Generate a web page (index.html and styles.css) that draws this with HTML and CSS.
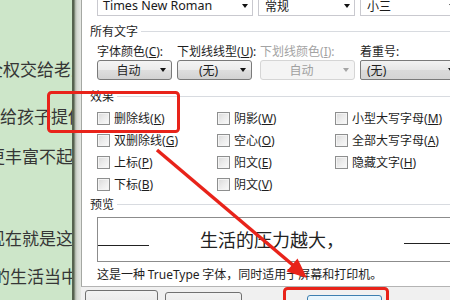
FILE: index.html
```html
<!DOCTYPE html>
<html>
<head>
<meta charset="utf-8">
<link rel="stylesheet" href="styles.css">
</head>
<body>
<div class="screen">
  <div class="doc">
    <p class="ln l0">的给孩子的的给孩子</p>
    <p class="ln l1">全权交给老人</p>
    <p class="ln l2">给孩子提供</p>
    <p class="ln l3">更丰富不起</p>
    <p class="ln l4">现在就是这</p>
    <p class="ln l5">的生活当中</p>
  </div>
  <div class="frame"></div>
  <div class="dialog">
    <div class="panel">
      <div class="row-top">
        <div class="combo c-name">Times New Roman<i class="arr"></i></div>
        <div class="combo c-style">常规<i class="arr"></i></div>
        <div class="combo c-size">小三<i class="arr"></i></div>
      </div>
      <div class="section-title">所有文字</div>
      <div class="fields">
        <div class="field f1"><div class="flabel">字体颜色<span class="k">(<u>C</u>):</span></div><div class="btn-drop">自动<i class="arr"></i></div></div>
        <div class="field f2"><div class="flabel">下划线线型<span class="k">(<u>U</u>):</span></div><div class="btn-drop"><span class="k">(</span>无<span class="k">)</span><i class="arr"></i></div></div>
        <div class="field f3"><div class="flabel disabled">下划线颜色<span class="k">(<u>I</u>):</span></div><div class="btn-drop off">自动<i class="arr"></i></div></div>
        <div class="field f4"><div class="flabel">着重号<span class="k">:</span></div><div class="btn-drop left"><span class="k">(</span>无<span class="k">)</span><i class="arr"></i></div></div>
      </div>
      <div class="section-title t-effect">效果</div>
      <div class="checks">
        <div class="chk"><span class="box"></span><span class="lbl">删除线<span class="k">(<u>K</u>)</span></span></div>
        <div class="chk"><span class="box"></span><span class="lbl">阴影<span class="k">(<u>W</u>)</span></span></div>
        <div class="chk"><span class="box"></span><span class="lbl">小型大写字母<span class="k">(<u>M</u>)</span></span></div>
        <div class="chk"><span class="box"></span><span class="lbl">双删除线<span class="k">(<u>G</u>)</span></span></div>
        <div class="chk"><span class="box"></span><span class="lbl">空心<span class="k">(<u>O</u>)</span></span></div>
        <div class="chk"><span class="box"></span><span class="lbl">全部大写字母<span class="k">(<u>A</u>)</span></span></div>
        <div class="chk"><span class="box"></span><span class="lbl">上标<span class="k">(<u>P</u>)</span></span></div>
        <div class="chk"><span class="box"></span><span class="lbl">阳文<span class="k">(<u>E</u>)</span></span></div>
        <div class="chk"><span class="box"></span><span class="lbl">隐藏文字<span class="k">(<u>H</u>)</span></span></div>
        <div class="chk"><span class="box"></span><span class="lbl">下标<span class="k">(<u>B</u>)</span></span></div>
        <div class="chk"><span class="box"></span><span class="lbl">阴文<span class="k">(<u>V</u>)</span></span></div>
      </div>
      <div class="section-title t-preview">预览</div>
      <div class="preview">
        <span class="pline pl-left"></span>
        <span class="ptext">生活的压力越大，</span>
        <span class="pline pl-right"></span>
      </div>
      <div class="note">这是一种 <span class="k">TrueType</span> 字体，同时适用于屏幕和打印机。</div>
    </div>
    <div class="footer">
      <div class="btn b1"></div>
      <div class="btn b2"></div>
      <div class="btn b3 hot"></div>
    </div>
  </div>
  <svg class="overlay" width="450" height="300" viewBox="0 0 450 300">
    <rect x="48.5" y="92.5" width="130" height="39" rx="3" fill="none" stroke="#e8231a" stroke-width="3"/>
    <rect x="284.5" y="288.5" width="103" height="22" rx="3" fill="none" stroke="#e8231a" stroke-width="3"/>
    <line x1="157" y1="150" x2="294" y2="266" stroke="#e8231a" stroke-width="3.5"/>
    <polygon points="307,278 286.5,271.5 297.5,258.5" fill="#e8231a"/>
  </svg>
</div>
</body>
</html>
```

FILE: styles.css
```css
* { box-sizing: border-box; }
html, body { margin: 0; padding: 0; }
body { width: 450px; height: 300px; overflow: hidden; background: #fff; }
.screen {
  position: relative;
  display: flex;
  width: 450px;
  height: 300px;
  overflow: hidden;
  font-family: "Noto Sans CJK SC", "Noto Sans", sans-serif;
  font-size: 12px;
  color: #1e1e1e;
  text-autospace: no-autospace;
}
.k { font-family: "Noto Sans", "DejaVu Sans", sans-serif; }

/* document behind dialog */
.doc {
  width: 72px;
  flex-shrink: 0;
  background: #cde6c9;
  overflow: hidden;
  color: #363636;
  font-size: 17px;
  line-height: 20px;
}
.ln { margin: 0; white-space: nowrap; }
.l0 { margin-top: -19px; text-indent: -6px; }
.l1 { margin-top: 58px; text-indent: -14px; }
.l2 { margin-top: 27px; text-indent: 0; }
.l3 { margin-top: 20px; text-indent: -12px; }
.l4 { margin-top: 62px; text-indent: -12px; }
.l5 { margin-top: 18px; text-indent: -7px; }

/* window frame strip */
.frame {
  width: 9px;
  flex-shrink: 0;
  background: linear-gradient(90deg, #56624f 0, #56624f 2px, #a9b0a4 3px, #d5d9d2 5px, #e6e8e4 9px);
}

.dialog {
  flex: 1;
  display: flex;
  flex-direction: column;
  background: #f0f0f0;
  min-width: 0;
}
.panel {
  height: 287px;
  flex-shrink: 0;
  background: #fff;
  border-left: 1px solid #a5a8a3;
  border-bottom: 1px solid #b4b4b4;
  padding-left: 8px;
  overflow: hidden;
}

/* top combos */
.row-top {
  display: flex;
  margin-top: -5px;
  margin-left: 7px;
  height: 21px;
}
.combo {
  position: relative;
  height: 21px;
  border: 1px solid #c9c9cf;
  background: #fff;
  padding-left: 6px;
  line-height: 20px;
  font-size: 12px;
  color: #1a1a1a;
  flex-shrink: 0;
}
.c-name { width: 156px; padding-left: 5px; font-family: "Noto Sans", sans-serif; font-size: 12.5px; }
.c-style { width: 97px; margin-left: 5px; }
.c-size { width: 100px; margin-left: 5px; }
.arr {
  position: absolute;
  right: 4px;
  top: 50%;
  margin-top: -2px;
  width: 0; height: 0;
  border-left: 3.5px solid transparent;
  border-right: 3.5px solid transparent;
  border-top: 4px solid #111;
}

/* section titles */
.section-title {
  display: flex;
  align-items: center;
  line-height: 16px;
  margin-top: 7px;
  color: #1e1e1e;
}
.section-title::after {
  content: "";
  flex: 1;
  border-top: 1px solid #d8dbe0;
  margin-left: 3px;
}
.t-effect { margin-top: 8px; }
.t-preview { margin-top: 1px; }

/* fields */
.fields {
  display: flex;
  margin-left: 7px;
  margin-top: 4px;
}
.field { flex-shrink: 0; }
.f1 { width: 75px; margin-right: 5px; }
.f2 { width: 75px; margin-right: 8px; }
.f3 { width: 95px; margin-right: 5px; }
.f4 { width: 100px; }
.flabel { line-height: 16px; height: 16px; white-space: nowrap; }
.flabel.disabled { color: #a3a3a3; }
.btn-drop {
  position: relative;
  margin-top: 1px;
  height: 20px;
  line-height: 18px;
  border: 1px solid #7a7a7a;
  border-radius: 3px;
  background: linear-gradient(#f4f4f4 0%, #ececec 48%, #dedede 52%, #d2d2d2 100%);
  text-align: center;
  padding-right: 12px;
}
.btn-drop .arr { right: 5px; }
.btn-drop.off {
  border-color: #d5d5d5;
  background: #f4f4f4;
  color: #a0a0a0;
}
.btn-drop.off .arr { border-top-color: #a5a5a5; }
.btn-drop.left {
  text-align: left;
  padding-left: 6px;
  border-radius: 2px;
  background: linear-gradient(#f2f2f2 0%, #e6e6e6 50%, #dadada 51%, #d4d4d4 100%);
}

/* checkboxes */
.checks {
  display: grid;
  grid-template-columns: 120px 118px 1fr;
  grid-auto-rows: 22px;
  margin-left: 7px;
  margin-top: 3px;
}
.chk {
  display: flex;
  align-items: center;
  gap: 4px;
  white-space: nowrap;
}
.box {
  width: 13px;
  height: 13px;
  flex-shrink: 0;
  border: 1px solid #8e8f8f;
  background: linear-gradient(135deg, #d9d9d9 0%, #ececec 50%, #fafafa 100%);
  box-shadow: inset 0 0 0 1px #f4f4f4;
}

/* preview */
.preview {
  display: flex;
  align-items: flex-start;
  margin-left: 7px;
  margin-top: 5px;
  height: 45px;
  border: 1px solid #8c8c8c;
  border-right: none;
  background: #fff;
}
.pline { display: block; height: 28px; border-bottom: 1px solid #222; flex-shrink: 0; }
.pl-left { width: 51px; }
.pl-right { width: 60px; height: 26px; margin-left: 60px; }
.ptext {
  margin-left: 51px;
  margin-top: 9px;
  font-size: 18px;
  line-height: 24px;
  color: #222;
  white-space: nowrap;
  flex-shrink: 0;
}
.note {
  margin-left: 7px;
  margin-top: 4px;
  line-height: 16px;
  white-space: nowrap;
}

/* footer buttons */
.footer {
  flex: 1;
  display: flex;
  align-items: flex-start;
  padding-left: 4px;
}
.btn {
  height: 22px;
  border: 1px solid #707070;
  border-radius: 3px;
  background: linear-gradient(#f2f2f2 0%, #ebebeb 50%, #dddddd 51%, #cfcfcf 100%);
  flex-shrink: 0;
}
.b1 { width: 73px; margin-top: 3px; }
.b2 { width: 77px; margin-left: 7px; margin-top: 5px; }
.b3 { width: 75px; margin-left: 65px; margin-top: 8px; }
.btn.hot {
  border-color: #3c7fb1;
  background: linear-gradient(#eaf6fd 0%, #d9f0fc 50%, #bee6fd 51%, #a7d9f5 100%);
}

/* annotation overlay */
.overlay {
  position: absolute;
  left: 0;
  top: 0;
  pointer-events: none;
}
```
